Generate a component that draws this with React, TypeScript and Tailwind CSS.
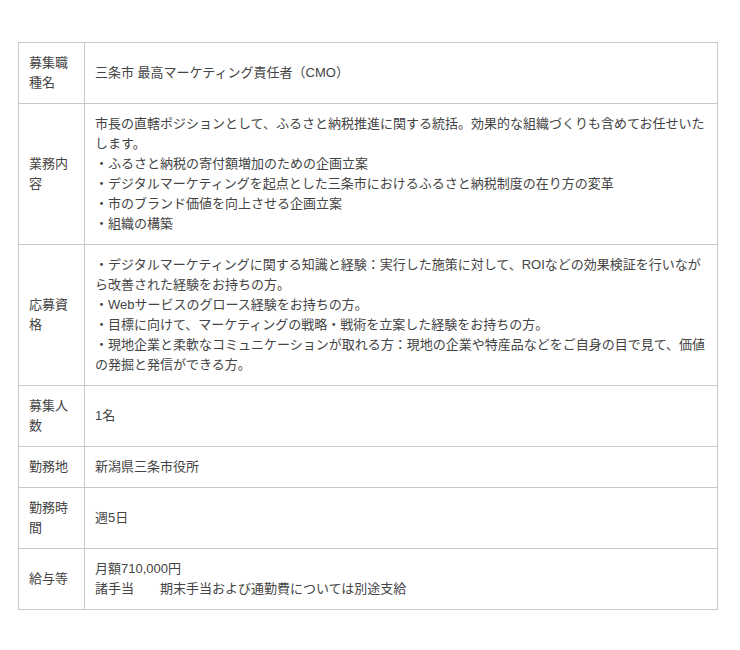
const rows: { label: string; lines: string[] }[] = [
  { label: "募集職種名", lines: ["三条市 最高マーケティング責任者（CMO）"] },
  {
    label: "業務内容",
    lines: [
      "市長の直轄ポジションとして、ふるさと納税推進に関する統括。効果的な組織づくりも含めてお任せいたします。",
      "・ふるさと納税の寄付額増加のための企画立案",
      "・デジタルマーケティングを起点とした三条市におけるふるさと納税制度の在り方の変革",
      "・市のブランド価値を向上させる企画立案",
      "・組織の構築",
    ],
  },
  {
    label: "応募資格",
    lines: [
      "・デジタルマーケティングに関する知識と経験：実行した施策に対して、ROIなどの効果検証を行いながら改善された経験をお持ちの方。",
      "・Webサービスのグロース経験をお持ちの方。",
      "・目標に向けて、マーケティングの戦略・戦術を立案した経験をお持ちの方。",
      "・現地企業と柔軟なコミュニケーションが取れる方：現地の企業や特産品などをご自身の目で見て、価値の発掘と発信ができる方。",
    ],
  },
  { label: "募集人数", lines: ["1名"] },
  { label: "勤務地", lines: ["新潟県三条市役所"] },
  { label: "勤務時間", lines: ["週5日"] },
  { label: "給与等", lines: ["月額710,000円", "諸手当\u3000\u3000期末手当および通勤費については別途支給"] },
];

export default function App() {
  return (
    <main className="min-h-screen bg-white px-[18px] pt-[42px] font-['Liberation_Sans','Noto_Sans_CJK_JP',sans-serif] text-[13px] leading-[20px] text-[#444]">
      <table className="w-[700px] table-fixed border-collapse">
        <colgroup>
          <col className="w-[66px]" />
          <col />
        </colgroup>
        <tbody>
          {rows.map((row) => (
            <tr key={row.label}>
              <td className="border border-[#c8c8c8] p-[10px] align-middle">{row.label}</td>
              <td className="border border-[#c8c8c8] p-[10px] align-middle">
                {row.lines.map((line, i) => (
                  <div key={i}>{line}</div>
                ))}
              </td>
            </tr>
          ))}
        </tbody>
      </table>
    </main>
  );
}
